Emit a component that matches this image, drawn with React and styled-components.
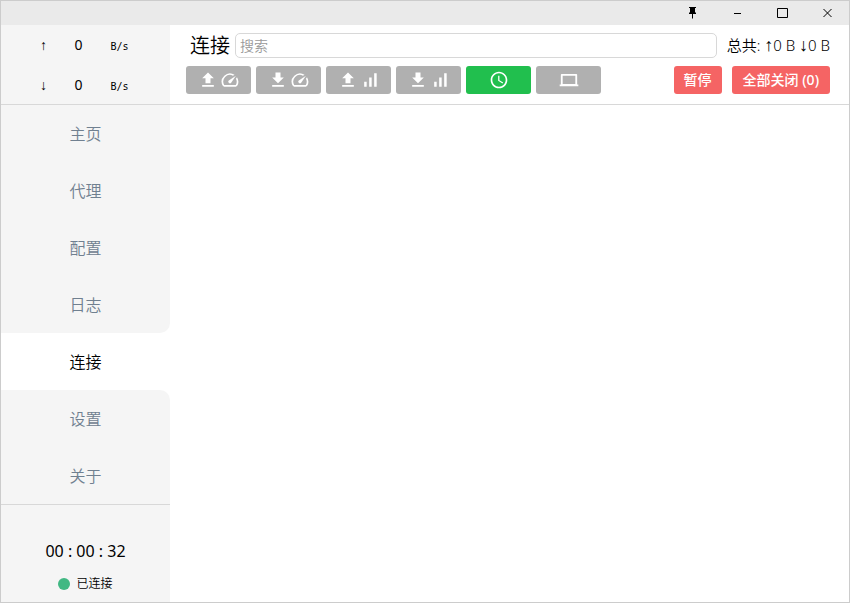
import React, { useState } from "react";
import styled, { createGlobalStyle } from "styled-components";

const GlobalStyle = createGlobalStyle`
  * {
    box-sizing: border-box;
  }

  body {
    margin: 0;
    color: #000;
    background: #fff;
    font-family: "Noto Sans", "Noto Sans CJK SC", sans-serif;
    font-weight: 350;
  }

  button,
  input {
    font: inherit;
  }
`;

const Window = styled.div`
  display: flex;
  flex-direction: column;
  min-height: 100vh;
  border: 1px solid #ccc;
`;

const TitleBar = styled.header`
  display: flex;
  justify-content: flex-end;
  height: 24px;
  background: #eaeaea;
`;

const WindowButton = styled.button`
  display: flex;
  align-items: center;
  justify-content: center;
  width: 45px;
  padding: 0 0 0 2px;
  border: none;
  background: none;
`;

const Body = styled.div`
  display: flex;
  flex: 1;
`;

const Sidebar = styled.aside`
  display: flex;
  flex-direction: column;
  flex: none;
  width: 169px;
`;

const Traffic = styled.div`
  height: 80px;
  border-bottom: 1px solid #d8d8d8;
  background: #f5f5f5;
`;

const TrafficRow = styled.div`
  display: grid;
  grid-template-columns: 24px 46px 36px;
  align-items: center;
  justify-content: center;
  height: 40px;
  padding-right: 2px;
  text-align: center;
  font-weight: 400;

  .arrow {
    font-family: "Liberation Sans", sans-serif;
    font-size: 14px;
  }

  .value {
    font-size: 14px;
    line-height: 20px;
  }

  .unit {
    padding-top: 2px;
    font-family: "DejaVu Sans Mono", monospace;
    font-size: 10px;
  }
`;

const Nav = styled.nav`
  border-bottom: 1px solid #d8d8d8;
`;

const NavItem = styled.a`
  display: flex;
  align-items: center;
  justify-content: center;
  height: 57px;
  padding-bottom: 2px;
  border-radius: ${props =>
    props.$side === "above" ? "0 0 10px 0" : props.$side === "below" ? "0 10px 0 0" : "0"};
  background: ${props => (props.$active ? "#fff" : "#f5f5f5")};
  color: ${props => (props.$active ? "#000" : "#708090")};
  font-size: 16px;
  text-decoration: none;
`;

const Footer = styled.footer`
  display: flex;
  flex: 1;
  flex-direction: column;
  align-items: center;
  justify-content: flex-end;
  gap: 11px;
  padding-bottom: 8px;
  background: #f5f5f5;
`;

const Timer = styled.div`
  font-size: 16px;
  font-weight: 400;
  line-height: 24px;
`;

const Status = styled.div`
  display: flex;
  align-items: center;
  gap: 6px;
  font-size: 12px;
  line-height: 20px;

  &::before {
    content: "";
    width: 12px;
    height: 12px;
    border-radius: 50%;
    background: #41b883;
  }
`;

const Main = styled.main`
  flex: 1;
  min-width: 0;
`;

const Toolbar = styled.div`
  display: flex;
  flex-direction: column;
  gap: 8px;
  height: 80px;
  padding: 8px 19px 0 16px;
  border-bottom: 1px solid #d8d8d8;
`;

const SearchRow = styled.div`
  display: flex;
  align-items: center;
  height: 25px;
  padding-left: 4px;
`;

const Title = styled.h1`
  margin: 0;
  font-size: 20px;
  font-weight: 350;
  line-height: 25px;
`;

const Search = styled.input`
  flex: 1;
  min-width: 0;
  height: 25px;
  margin: 0 10px 0 5px;
  padding: 0 4px;
  border: 1px solid #d8d8d8;
  border-radius: 5px;
  outline: none;
  background: #fff;
  font-size: 14px;

  &::placeholder {
    color: #999;
  }
`;

const Total = styled.span`
  font-size: 15px;
  line-height: 25px;
  white-space: nowrap;

  .arrow {
    font-family: "Liberation Sans", sans-serif;
    font-size: 18px;
    line-height: 18px;
  }
`;

const ButtonRow = styled.div`
  display: flex;
  align-items: center;
  gap: 5px;
`;

const SortButton = styled.button`
  display: flex;
  align-items: center;
  justify-content: center;
  gap: 2px;
  width: 65px;
  height: 28px;
  padding: 0;
  border: none;
  border-radius: 3px;
  background: ${props => (props.$active ? "#21bf4e" : "#b0b0b0")};
  color: #fff;
`;

const Actions = styled.div`
  display: flex;
  gap: 10px;
  margin-left: auto;
`;

const DangerButton = styled.button`
  height: 28px;
  padding: 0 ${props => (props.$wide ? "11px" : "10px")};
  border: none;
  border-radius: 3px;
  background: #f56464;
  color: #fff;
  font-size: 14px;
  font-weight: 500;
  line-height: 28px;
  white-space: nowrap;
`;

const paths = {
  upload: "M9 16h6v-6h4l-7-7-7 7h4zm-4 2h14v2H5z",
  download: "M19 9h-4V3H9v6H5l7 7 7-7zM5 18v2h14v-2H5z",
  speed:
    "M20.38 8.57l-1.23 1.85a8 8 0 0 1-.22 7.58H5.07A8 8 0 0 1 15.58 6.85l1.85-1.23A10 10 0 0 0 3.35 19a2 2 0 0 0 1.72 1h13.85a2 2 0 0 0 1.74-1 10 10 0 0 0-.27-10.44zm-9.79 6.84a2 2 0 0 0 2.83 0l5.66-8.49-8.49 5.66a2 2 0 0 0 0 2.83z",
  signal: "M17 4h3v16h-3zM5 14h3v6H5zm6-5h3v11h-3z",
  clock:
    "M11.99 2C6.47 2 2 6.48 2 12s4.47 10 9.99 10C17.52 22 22 17.52 22 12S17.52 2 11.99 2zM12 20c-4.42 0-8-3.58-8-8s3.58-8 8-8 8 3.58 8 8-3.58 8-8 8zm.5-13H11v6l5.25 3.15.75-1.23-4.5-2.67z",
  laptop: "M3.2 4.8h17.600a1 1 0 0 1 1 1v11.600H23.200v2.100H.8v-2.100h1.400V5.800a1 1 0 0 1 1-1zM4.400 6.800v9.900h15.200V6.800z"
};

const Icon = ({ name }) => (
  <svg width="20" height="20" viewBox="0 0 24 24" fill="currentColor" aria-hidden="true">
    <path d={paths[name]} />
  </svg>
);

const pages = ["主页", "代理", "配置", "日志", "连接", "设置", "关于"];

const sorts = [
  { label: "上传速度", icons: ["upload", "speed"] },
  { label: "下载速度", icons: ["download", "speed"] },
  { label: "上传流量", icons: ["upload", "signal"] },
  { label: "下载流量", icons: ["download", "signal"] },
  { label: "时间", icons: ["clock"] },
  { label: "进程", icons: ["laptop"] }
];

const WindowControls = () => (
  <TitleBar>
    <WindowButton aria-label="置顶">
      <svg width="11" height="12" viewBox="0 0 11 12">
        <path d="M2 0h7v1H8v4l1 1v1H6v4.500H5V7H2V6l1-1V1H2z" />
      </svg>
    </WindowButton>
    <WindowButton aria-label="最小化">
      <svg width="7" height="12" viewBox="0 0 7 12">
        <path d="M0 6h7v1H0z" />
      </svg>
    </WindowButton>
    <WindowButton aria-label="最大化">
      <svg width="11" height="10" viewBox="0 0 11 10" fill="none" stroke="#000">
        <path d="M.5.5h10v9H.5z" />
      </svg>
    </WindowButton>
    <WindowButton aria-label="关闭">
      <svg width="9" height="10" viewBox="0 0 9 10" stroke="#000">
        <path d="M.5 1l8 8M8.500 1l-8 8" />
      </svg>
    </WindowButton>
  </TitleBar>
);

const TrafficLine = ({ arrow }) => (
  <TrafficRow>
    <span className="arrow">{arrow}</span>
    <span className="value">0</span>
    <span className="unit">B/s</span>
  </TrafficRow>
);

const App = () => {
  const [page, setPage] = useState(4);
  const [sort, setSort] = useState(4);

  return (
    <Window>
      <GlobalStyle />
      <WindowControls />
      <Body>
        <Sidebar>
          <Traffic>
            <TrafficLine arrow="↑" />
            <TrafficLine arrow="↓" />
          </Traffic>
          <Nav>
            {pages.map((name, i) => (
              <NavItem
                key={name}
                href="#"
                $active={i === page}
                $side={i === page - 1 ? "above" : i === page + 1 ? "below" : null}
                onClick={() => setPage(i)}
              >
                {name}
              </NavItem>
            ))}
          </Nav>
          <Footer>
            <Timer>00 : 00 : 32</Timer>
            <Status>已连接</Status>
          </Footer>
        </Sidebar>
        <Main>
          <Toolbar>
            <SearchRow>
              <Title>连接</Title>
              <Search type="text" placeholder="搜索" aria-label="搜索" />
              <Total>
                总共: <span className="arrow">↑</span>0 B <span className="arrow">↓</span>0 B
              </Total>
            </SearchRow>
            <ButtonRow>
              {sorts.map(({ label, icons }, i) => (
                <SortButton
                  key={label}
                  aria-label={label}
                  $active={i === sort}
                  onClick={() => setSort(i)}
                >
                  {icons.map(name => (
                    <Icon key={name} name={name} />
                  ))}
                </SortButton>
              ))}
              <Actions>
                <DangerButton>暂停</DangerButton>
                <DangerButton $wide>全部关闭 (0)</DangerButton>
              </Actions>
            </ButtonRow>
          </Toolbar>
        </Main>
      </Body>
    </Window>
  );
};

export default App;
